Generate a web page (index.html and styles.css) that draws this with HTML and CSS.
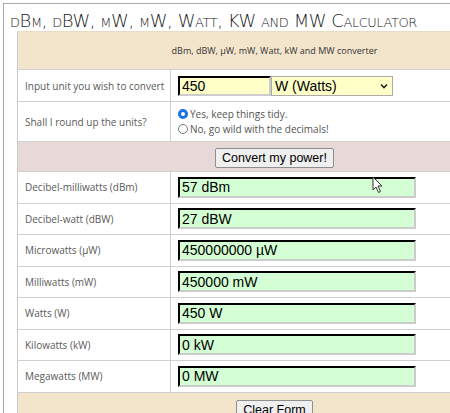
FILE: index.html
```html
<!DOCTYPE html>
<html lang="en">
<head>
  <meta charset="UTF-8" />
  <title>dBm, dBW, µW, mW, Watt, KW and MW Calculator</title>
  <link rel="stylesheet" href="styles.css">
</head>
<body>

<div class="page">
  <h1 class="title">dBm, dBW, µW, mW, Watt, KW and MW Calculator</h1>

  <table class="calc">
    <tr class="head">
      <td colspan="2">dBm, dBW, µW, mW, Watt, kW and MW converter</td>
    </tr>
    <tr class="row-input">
      <td class="label">Input unit you wish to convert</td>
      <td>
        <div class="input-group">
          <input type="text" class="in-value" value="450" />
          <div class="unit-select">
            <span>W (Watts)</span>
            <svg width="8" height="6" viewBox="0 0 8 6"><path d="M1 1.5 L4 4.5 L7 1.5" fill="none" stroke="#222" stroke-width="1.6"/></svg>
          </div>
        </div>
      </td>
    </tr>
    <tr class="row-round">
      <td class="label">Shall I round up the units?</td>
      <td>
        <label class="radio"><span class="dot on"></span>Yes, keep things tidy.</label>
        <label class="radio"><span class="dot"></span>No, go wild with the decimals!</label>
      </td>
    </tr>
    <tr class="row-btn convert">
      <td colspan="2"><button class="btn">Convert my power!</button></td>
    </tr>
    <tr class="result">
      <td class="label">Decibel-milliwatts (dBm)</td>
      <td><input type="text" class="out" value="57 dBm" /></td>
    </tr>
    <tr class="result">
      <td class="label">Decibel-watt (dBW)</td>
      <td><input type="text" class="out" value="27 dBW" /></td>
    </tr>
    <tr class="result">
      <td class="label">Microwatts (µW)</td>
      <td><input type="text" class="out" value="450000000 µW" /></td>
    </tr>
    <tr class="result">
      <td class="label">Milliwatts (mW)</td>
      <td><input type="text" class="out" value="450000 mW" /></td>
    </tr>
    <tr class="result">
      <td class="label">Watts (W)</td>
      <td><input type="text" class="out" value="450 W" /></td>
    </tr>
    <tr class="result">
      <td class="label">Kilowatts (kW)</td>
      <td><input type="text" class="out" value="0 kW" /></td>
    </tr>
    <tr class="result">
      <td class="label">Megawatts (MW)</td>
      <td><input type="text" class="out" value="0 MW" /></td>
    </tr>
    <tr class="row-btn clear">
      <td colspan="2"><button class="btn">Clear Form</button></td>
    </tr>
  </table>

  <svg class="cursor" width="12" height="18" viewBox="0 0 12 18">
    <path d="M1 1 L1 14 L4 11 L6.5 16.5 L8.5 15.5 L6 10 L10 10 Z" fill="#fff" stroke="#333" stroke-width="1"/>
  </svg>
</div>

</body>
</html>
```

FILE: styles.css
```css
html, body {
  overflow: hidden;
}

body {
  margin: 0;
  padding: 3px 0 0 3px;
  font-family: "Open Sans", sans-serif;
  background: #fff;
}

.page {
  position: relative;
  width: 600px;
  border-top: 1px solid #a8a8a8;
  border-left: 1px solid #a8a8a8;
  padding: 6px 0 40px 6px;
}

.title {
  margin: 0;
  height: 21px;
  font-family: "DejaVu Sans", sans-serif;
  font-weight: 200;
  font-variant: small-caps;
  font-size: 18px;
  line-height: 21px;
  color: #1a1a1a;
  letter-spacing: -0.45px;
  white-space: nowrap;
}

.calc {
  margin: 0 0 0 7px;
  width: 514px;
  border-collapse: collapse;
  border-left: 1px solid #c8c8c8;
}

.calc td {
  border-top: 1px solid #d0d0d0;
  padding: 0;
}

.head td {
  height: 37px;
  background: #f3e5cc;
  text-align: center;
  font-size: 9px;
  color: #333;
  border-top: 1px solid #e8dcc6;
}

.label {
  width: 145px;
  padding-left: 7px !important;
  border-right: 1px solid #d0d0d0;
  font-size: 10px;
  color: #5a5a5a;
}

.row-input td {
  height: 31px;
}

.row-round td {
  height: 39px;
}

.input-group {
  display: flex;
  margin-left: 7px;
}

.in-value {
  width: 93px;
  height: 20px;
  box-sizing: border-box;
  margin: 0;
  padding: 0 2px;
  border: 2px inset #333;
  border-color: #222 #ccc #ccc #222;
  background: #ffffc8;
  font-family: "Liberation Sans", Arial, sans-serif;
  font-size: 14px;
  color: #000;
}

.unit-select {
  display: flex;
  align-items: center;
  justify-content: space-between;
  width: 122px;
  height: 20px;
  box-sizing: border-box;
  padding: 0 4px 0 3px;
  border: 1px solid #aaa;
  background: #ffffc8;
  font-family: "Liberation Sans", Arial, sans-serif;
  font-size: 14px;
  color: #000;
}

.radio {
  display: flex;
  align-items: center;
  margin-left: 7px;
  height: 15px;
  font-size: 10px;
  color: #555;
}

.dot {
  width: 10px;
  height: 10px;
  box-sizing: border-box;
  border: 1px solid #777;
  border-radius: 50%;
  margin-right: 2px;
  background: #fff;
}

.dot.on {
  border: 3px solid #1a73e8;
}

.row-btn td {
  text-align: center;
}

.convert td {
  height: 29px;
  background: #e8d9d9;
}

.clear td {
  height: 30px;
  background: #f3e5cc;
  vertical-align: top;
  padding-top: 4px;
}

.btn {
  margin: 0;
  padding: 1px 6px;
  height: 20px;
  font-family: "Liberation Sans", Arial, sans-serif;
  font-size: 12.5px;
  color: #000;
  background: #efefef;
  border: 1px solid #8f8f8f;
  border-radius: 2px;
}

.result td {
  height: 30.5px;
}

.out {
  display: block;
  margin-left: 7px;
  width: 238px;
  height: 21px;
  box-sizing: border-box;
  padding: 0 2px;
  border: 2px inset #333;
  border-color: #222 #ccc #ccc #222;
  background: #d4ffd4;
  font-family: "Liberation Sans", Arial, sans-serif;
  font-size: 14px;
  color: #000;
}

.cursor {
  position: absolute;
  left: 368px;
  top: 172px;
}
```
